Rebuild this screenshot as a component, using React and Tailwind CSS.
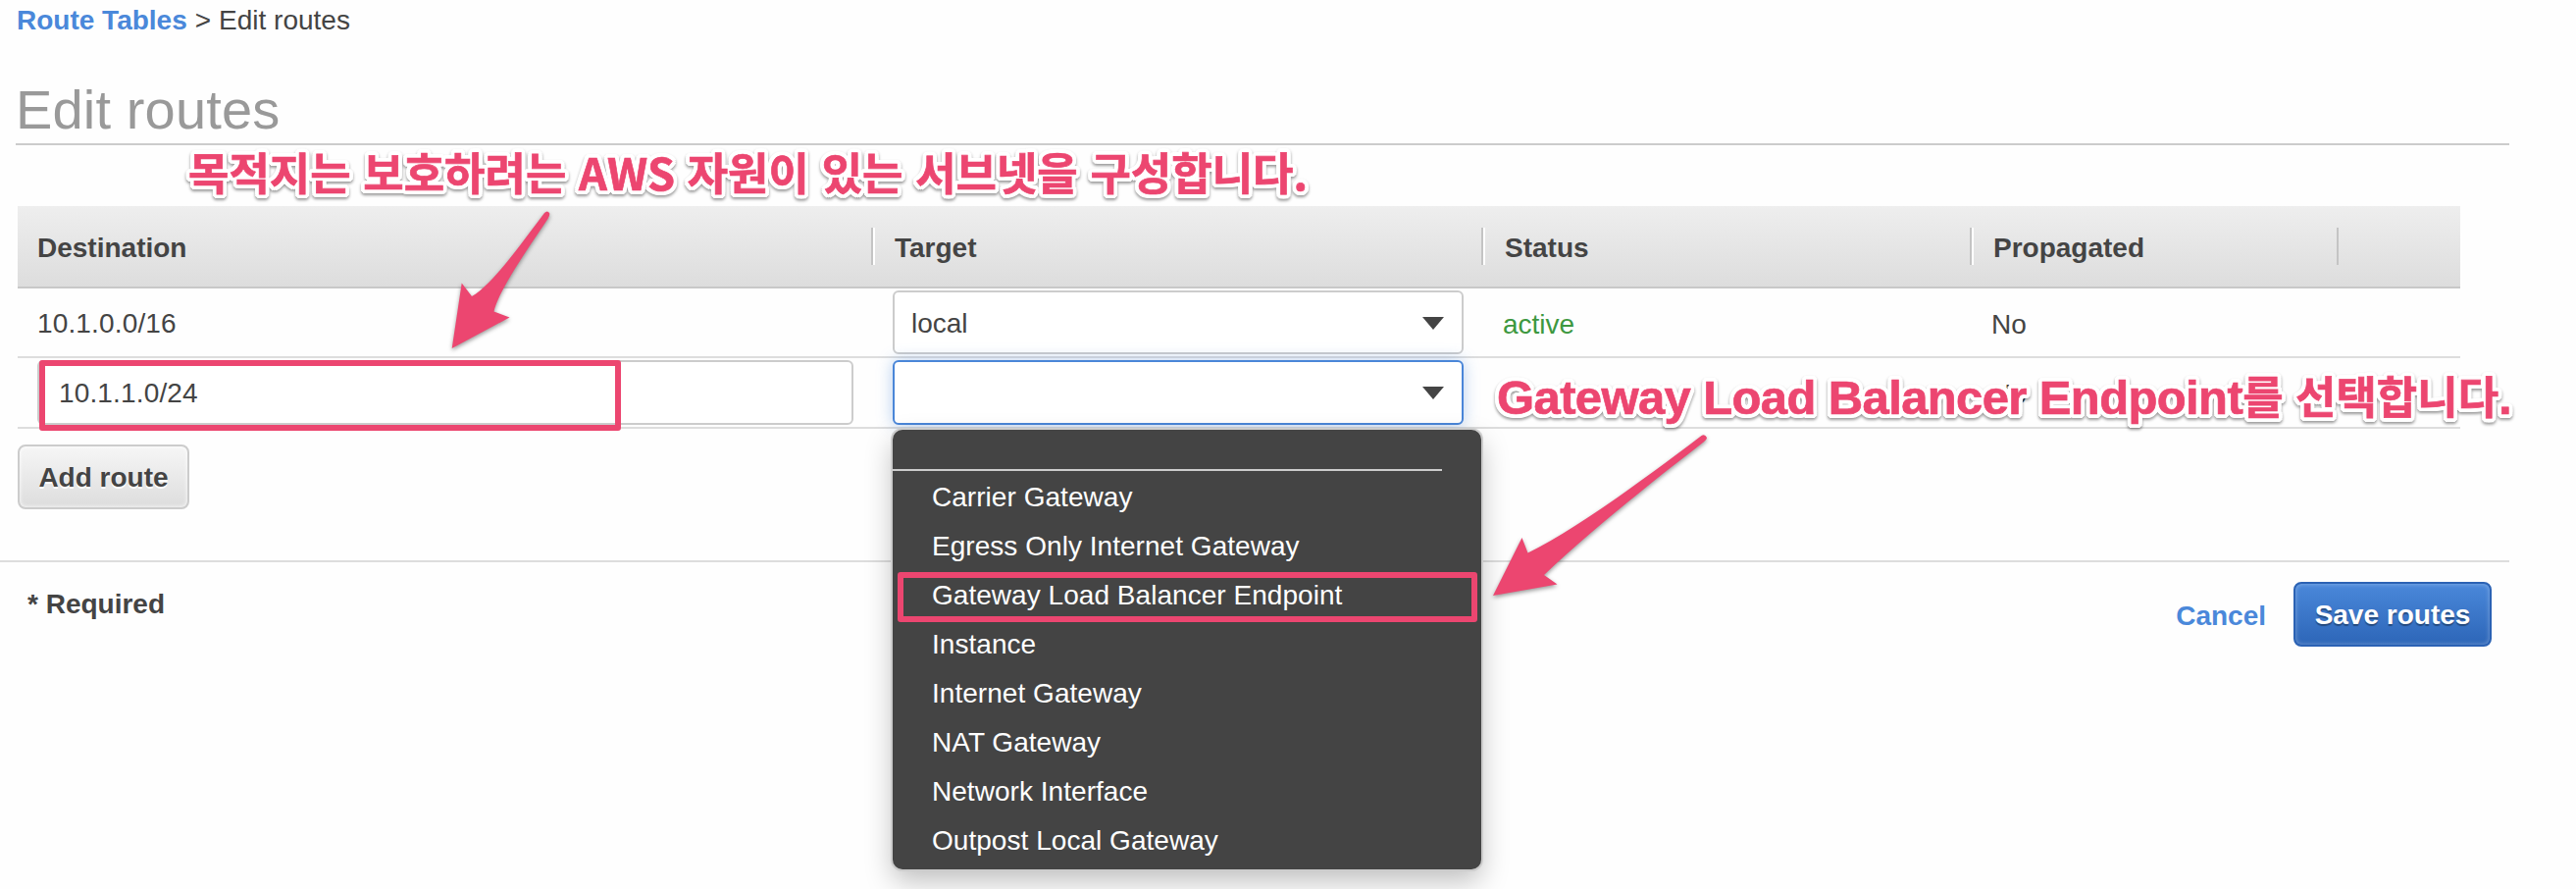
const CALLOUT =
  "absolute whitespace-nowrap font-bold text-[#ec4670] [-webkit-text-stroke:0.7px_#ec4670] [text-shadow:4px_0_0_white,-4px_0_0_white,0_4px_0_white,0_-4px_0_white,3px_3px_0_white,-3px_3px_0_white,3px_-3px_0_white,-3px_-3px_0_white,4px_2px_0_white,-4px_2px_0_white,4px_-2px_0_white,-4px_-2px_0_white,2px_4px_0_white,-2px_4px_0_white,2px_-4px_0_white,-2px_-4px_0_white] [filter:drop-shadow(0_2px_1.5px_rgba(0,0,0,.4))]";

const OPTIONS = [
  "Carrier Gateway",
  "Egress Only Internet Gateway",
  "Gateway Load Balancer Endpoint",
  "Instance",
  "Internet Gateway",
  "NAT Gateway",
  "Network Interface",
  "Outpost Local Gateway",
];

function Caret() {
  return (
    <svg width="22" height="13" viewBox="0 0 22 13" className="mt-px shrink-0">
      <path d="M0 0H22L11 13Z" fill="#444" />
    </svg>
  );
}

function HeaderCell({ children, last }) {
  return (
    <div className="flex h-full pt-[22px]">
      <div className="h-[38px] w-[2px] bg-[#c4c4c4]" />
      <div className={last ? "h-[38px] w-[2px]" : "h-[38px] w-[2px] bg-white"} />
      <span className="pl-5 pt-[5px] leading-8">{children}</span>
    </div>
  );
}

function Arrow({ d, className, w, h }) {
  return (
    <svg
      className={"absolute overflow-visible [filter:drop-shadow(0_2px_2px_rgba(0,0,0,.4))] " + className}
      width={w}
      height={h}
    >
      <path d={d} fill="#ec4670" />
    </svg>
  );
}

export default function App() {
  return (
    <div className="relative flex h-[906px] w-[2626px] flex-col overflow-hidden bg-[#fefefe] font-['Liberation_Sans',Arial,sans-serif] text-[28px] leading-8 text-[#444]">
      <nav className="flex h-[78px] gap-2 pl-[17px] pt-[5px]">
        <a className="font-bold text-[#4a88da]">Route Tables</a>
        <span>&gt;</span>
        <span>Edit routes</span>
      </nav>
      <h1 className="ml-4 h-[70px] w-[2542px] border-b-2 border-[#ccc] text-[56px] leading-[68px] tracking-[0.15px] text-[#999]">
        Edit routes
      </h1>

      <div className="ml-[18px] mt-[62px] w-[2490px]">
        <div className="grid h-[84px] grid-cols-[870px_622px_498px_374px_126px] border-b-2 border-[#c8c8c8] bg-linear-to-b from-[#eee] to-[#ddd] font-bold">
          <div className="pl-5 pt-[27px]">Destination</div>
          <HeaderCell>Target</HeaderCell>
          <HeaderCell>Status</HeaderCell>
          <HeaderCell>Propagated</HeaderCell>
          <HeaderCell last />
        </div>
        <div className="grid h-[71px] grid-cols-[870px_622px_498px_374px_126px] border-b-2 border-[#ddd]">
          <div className="pl-5 pt-[20px] tracking-[0.15px]">10.1.0.0/16</div>
          <div className="pl-[22px] pt-[2px]">
            <div className="flex h-[65px] w-[582px] items-center justify-between rounded-[6px] border-2 border-[#ccc] bg-white pl-[17px] pr-[18px]">
              <span className="pt-[2px]">local</span>
              <Caret />
            </div>
          </div>
          <div className="pl-[22px] pt-[21px] text-[#3d9840]">active</div>
          <div className="pl-[22px] pt-[21px]">No</div>
        </div>
        <div className="grid h-[72px] grid-cols-[870px_622px_498px_374px_126px] border-b-2 border-[#ddd]">
          <div className="pl-5 pt-[2px]">
            <div className="flex h-[66px] w-[832px] items-center rounded-[6px] border-2 border-[#ccc] bg-white pl-5 pt-[2px] tracking-[0.15px]">
              10.1.1.0/24
            </div>
          </div>
          <div className="pl-[22px] pt-[2px]">
            <div className="flex h-[66px] w-[582px] items-center justify-end rounded-[6px] border-2 border-[#4a86d8] bg-white pr-[18px] shadow-[0_0_16px_rgba(74,134,216,.4)]">
              <Caret />
            </div>
          </div>
          <div />
          <div className="pl-[22px] pt-[21px]">No</div>
          <div className="pl-[46px] pt-[34px]">
            <svg width="20" height="20" viewBox="0 0 20 20" stroke="#444" strokeWidth="4">
              <path d="M2 2L18 18M18 2L2 18" />
            </svg>
          </div>
        </div>
      </div>

      <button className="ml-[18px] mt-4 h-[66px] w-[175px] shrink-0 rounded-[8px] border-2 border-[#ccc] bg-linear-to-b from-[#f6f6f6] to-[#ddd] pt-[2px] font-bold shadow-[inset_0_0_4px_white] [text-shadow:0_2px_0_white]">
        Add route
      </button>

      <footer className="mt-[52px] flex h-[90px] w-[2558px] justify-between border-t-2 border-[#ddd]">
        <span className="pl-7 pt-[27px] font-bold">* Required</span>
        <div className="flex items-start pr-[18px] pt-[20px] font-bold">
          <a className="pr-[28px] pt-[19px] text-[#4a88da]">Cancel</a>
          <button className="h-[66px] w-[202px] rounded-[8px] border-2 border-[#2b62b4] bg-linear-to-b from-[#4a88da] to-[#2d66b8] pt-[2px] text-white shadow-[inset_0_0_5px_rgba(255,255,255,.35)] [text-shadow:0_2px_1px_rgba(0,0,0,.35)]">
            Save routes
          </button>
        </div>
      </footer>

      <ul className="absolute left-[910px] top-[438px] h-[448px] w-[600px] rounded-[10px] bg-[#444] text-white shadow-[0_0_0_2px_#ccc,0_12px_28px_rgba(0,0,0,.25)]">
        <li className="h-[42px] w-[560px] border-b-2 border-[#ccc]" />
        {OPTIONS.map((o) => (
          <li key={o} className="h-[50px] pl-10 pt-[11px] tracking-[0.04px]">
            {o}
          </li>
        ))}
      </ul>

      <div className="absolute left-[40px] top-[367px] h-[72px] w-[593px] rounded-[3px] border-[6px] border-[#ec4670]" />
      <div className="absolute left-[915px] top-[583px] h-[51px] w-[591px] rounded-[3px] border-[6px] border-[#ec4670]" />

      <Arrow
        className="left-[440px] top-[200px]"
        w={200}
        h={180}
        d="M20.7 155L30.7 88.5L41 102C62 90 90 50 115 17Q118 14 120 17Q121 19 118.500 23C95 58 68 97 63.500 117.500L79.500 123.500Z"
      />
      <Arrow
        className="left-[1500px] top-[420px]"
        w={260}
        h={210}
        d="M22 187L51.500 128L57.500 143.500C105 120 170 73 234.500 24Q238 22 240 26Q240 28 236 31C170 82 115 127 74 166L87.500 175.500Z"
      />

      <div className={CALLOUT + " left-[192px] top-[145px] text-[45px] leading-[60px] [word-spacing:2.5px] font-['Noto_Sans_CJK_KR',sans-serif]"}>
        목적지는 보호하려는 AWS 자원이 있는 서브넷을 구성합니다.
      </div>
      <div className={CALLOUT + " left-[1526px] top-[375px] text-[49px] leading-[60px] tracking-[-0.62px] font-['Liberation_Sans','Noto_Sans_CJK_KR',sans-serif]"}>
        Gateway Load Balancer Endpoint
        <span className="text-[45px] tracking-normal">를 선택합니다</span>.
      </div>
    </div>
  );
}
